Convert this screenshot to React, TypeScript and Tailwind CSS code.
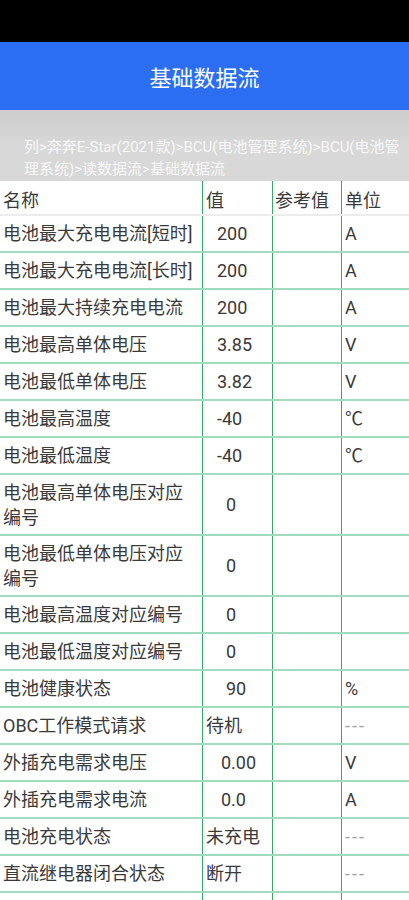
import React from "react";

type Row = {
  name: string[];
  value: string;
  pad: string;
  unit: string;
  tall?: boolean;
  dim?: boolean;
};

const rows: Row[] = [
  { name: ["电池最大充电电流[短时]"], value: "200", pad: "pl-[14px]", unit: "A" },
  { name: ["电池最大充电电流[长时]"], value: "200", pad: "pl-[14px]", unit: "A" },
  { name: ["电池最大持续充电电流"], value: "200", pad: "pl-[14px]", unit: "A" },
  { name: ["电池最高单体电压"], value: "3.85", pad: "pl-[14px]", unit: "V" },
  { name: ["电池最低单体电压"], value: "3.82", pad: "pl-[14px]", unit: "V" },
  { name: ["电池最高温度"], value: "-40", pad: "pl-[14px]", unit: "℃" },
  { name: ["电池最低温度"], value: "-40", pad: "pl-[14px]", unit: "℃" },
  { name: ["电池最高单体电压对应", "编号"], value: "0", pad: "pl-[23px]", unit: "", tall: true },
  { name: ["电池最低单体电压对应", "编号"], value: "0", pad: "pl-[23px]", unit: "", tall: true },
  { name: ["电池最高温度对应编号"], value: "0", pad: "pl-[23px]", unit: "" },
  { name: ["电池最低温度对应编号"], value: "0", pad: "pl-[23px]", unit: "" },
  { name: ["电池健康状态"], value: "90", pad: "pl-[23px]", unit: "%" },
  { name: ["OBC工作模式请求"], value: "待机", pad: "pl-[3px]", unit: "---", dim: true },
  { name: ["外插充电需求电压"], value: "0.00", pad: "pl-[18px]", unit: "V" },
  { name: ["外插充电需求电流"], value: "0.0", pad: "pl-[18px]", unit: "A" },
  { name: ["电池充电状态"], value: "未充电", pad: "pl-[3px]", unit: "---", dim: true },
  { name: ["直流继电器闭合状态"], value: "断开", pad: "pl-[3px]", unit: "---", dim: true },
];

const font = {
  fontFamily: 'Roboto, "Noto Sans CJK SC", "Noto Sans", sans-serif',
};

export default function App() {
  return (
    <div className="w-[409px] bg-white text-[#3a3a3a]" style={font}>
      {/* status bar */}
      <div className="h-[42px] bg-black" />
      {/* title bar */}
      <div className="h-[68px] bg-[#2c6ef2] flex items-center justify-center pt-[6px]">
        <span className="text-white text-[22px] leading-none">基础数据流</span>
      </div>
      {/* breadcrumb */}
      <div className="h-[71px] bg-gradient-to-b from-[#cdcdcd] via-[#d8d8d8] to-[#d8d8d8] pt-[26px] pl-[24px] text-[15px] leading-[22px] text-[#f7f7f7]">
        <div className="whitespace-nowrap">列&gt;奔奔E-Star(2021款)&gt;BCU(电池管理系统)&gt;BCU(电池管</div>
        <div className="whitespace-nowrap">理系统)&gt;读数据流&gt;基础数据流</div>
      </div>
      {/* table header */}
      <div className="flex h-[35px] border-b-2 border-[#ececec] text-[18px] leading-[25px]">
        <div className="w-[203px] border-r border-[#3aa86b] pl-[3px] pt-[5px] flex items-center">名称</div>
        <div className="w-[70px] border-r border-[#3aa86b] pl-[3px] pt-[5px] flex items-center">值</div>
        <div className="w-[69px] border-r border-[#3aa86b] pl-[2px] pt-[5px] flex items-center">参考值</div>
        <div className="flex-1 pl-[3px] pt-[5px] flex items-center">单位</div>
      </div>
      {rows.map((r, i) => (
        <div
          key={i}
          className={`flex border-b-2 border-[#a3dbbf] text-[18px] leading-[25px] ${
            r.tall ? "h-[61px]" : "h-[37px]"
          }`}
        >
          <div className="w-[203px] border-r border-[#3aa86b] pl-[3px] flex flex-col justify-center whitespace-nowrap">
            {r.name.map((n, j) => (
              <span key={j}>{n}</span>
            ))}
          </div>
          <div className={`w-[70px] border-r border-[#3aa86b] flex items-center whitespace-nowrap ${r.pad}`}>
            {r.value}
          </div>
          <div className="w-[69px] border-r border-[#3aa86b]" />
          <div
            className={`flex-1 pl-[3px] flex items-center ${
              r.dim ? "text-[#a3a3a3] tracking-[2px]" : ""
            }`}
          >
            {r.unit}
          </div>
        </div>
      ))}
      <div className="flex h-[37px] border-b-2 border-[#a3dbbf]">
        <div className="w-[203px] border-r border-[#3aa86b]" />
        <div className="w-[70px] border-r border-[#3aa86b]" />
        <div className="w-[69px] border-r border-[#3aa86b]" />
        <div className="flex-1" />
      </div>
    </div>
  );
}
